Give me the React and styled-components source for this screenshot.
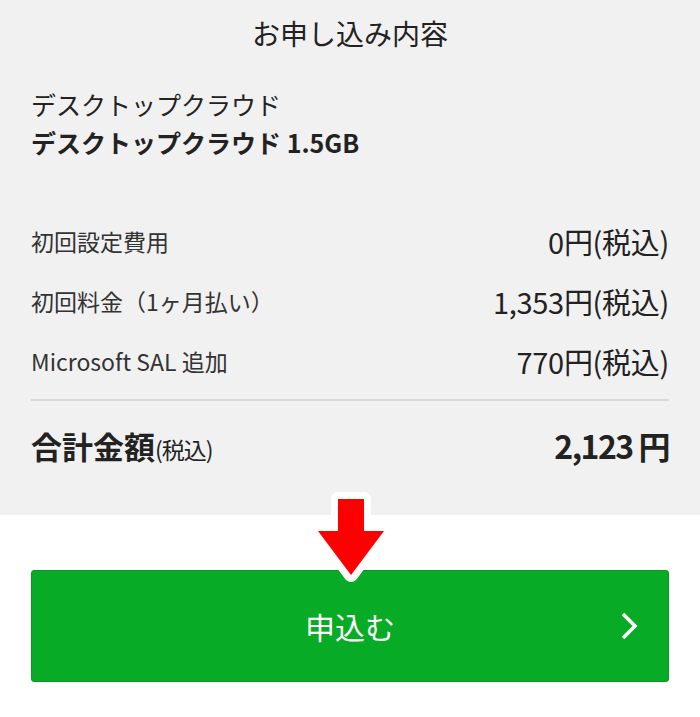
import React from 'react';
import styled, { createGlobalStyle } from 'styled-components';

const GlobalStyle = createGlobalStyle`
  html, body {
    margin: 0;
    padding: 0;
    background: #ffffff;
  }
  body {
    font-family: 'Noto Sans CJK JP', 'Noto Sans', sans-serif;
    color: #222222;
  }
`;

const Summary = styled.section`
  background: #f1f1f1;
  padding: 12px 31px 45px;
`;

const Title = styled.h2`
  margin: 0;
  font-size: 28px;
  line-height: 42px;
  font-weight: 400;
  text-align: center;
  color: #222;
`;

const Product = styled.div`
  margin-top: 32px;
  margin-bottom: 49px;
`;

const ProductLine = styled.div`
  font-size: 25px;
  line-height: ${(p) => (p.bold ? '40px' : '36px')};
  font-weight: ${(p) => (p.bold ? 700 : 400)};
  color: #222;
`;

const Row = styled.div`
  display: flex;
  justify-content: space-between;
  align-items: center;
  height: 60px;
`;

const Label = styled.span`
  font-size: 23px;
  color: #333;
`;

const Value = styled.span`
  font-size: 29px;
  color: #222;
  letter-spacing: -0.3px;
`;

const Divider = styled.hr`
  margin: 8px 0 0;
  border: none;
  height: 2px;
  background: #d9d9d9;
`;

const TotalRow = styled.div`
  display: flex;
  justify-content: space-between;
  align-items: center;
  height: 50px;
  margin-top: 19px;
`;

const TotalLabel = styled.span`
  font-size: 31px;
  font-weight: 700;
  color: #222;

  small {
    font-size: 23px;
    font-weight: 400;
    letter-spacing: -1px;
  }
`;

const TotalValue = styled.span`
  font-size: 32px;
  font-weight: 700;
  color: #222;
  letter-spacing: -1.5px;
`;

const ButtonArea = styled.div`
  position: relative;
  padding: 55px 31px;
`;

const ApplyButton = styled.button`
  position: relative;
  display: flex;
  align-items: center;
  justify-content: center;
  width: 100%;
  height: 112px;
  border: 1px solid #069a20;
  border-radius: 3px;
  background: #08ab25;
  color: #ffffff;
  font-family: 'Noto Sans CJK JP', 'Noto Sans', sans-serif;
  font-size: 30px;
  cursor: pointer;
`;

const Chevron = styled.svg`
  position: absolute;
  right: 30px;
  top: 50%;
  transform: translateY(-50%);
`;

const PointerArrow = styled.svg`
  position: absolute;
  left: 310px;
  top: -28px;
  z-index: 2;
`;

const rows = [
  { label: '初回設定費用', value: '0円(税込)' },
  { label: '初回料金（1ヶ月払い）', value: '1,353円(税込)' },
  { label: 'Microsoft SAL 追加', value: '770円(税込)' },
];

export default function App() {
  return (
    <>
      <GlobalStyle />
      <Summary>
        <Title>お申し込み内容</Title>
        <Product>
          <ProductLine>デスクトップクラウド</ProductLine>
          <ProductLine bold>デスクトップクラウド 1.5GB</ProductLine>
        </Product>
        {rows.map((r) => (
          <Row key={r.label}>
            <Label>{r.label}</Label>
            <Value>{r.value}</Value>
          </Row>
        ))}
        <Divider />
        <TotalRow>
          <TotalLabel>
            合計金額<small>(税込)</small>
          </TotalLabel>
          <TotalValue>2,123 円</TotalValue>
        </TotalRow>
      </Summary>
      <ButtonArea>
        <PointerArrow width="82" height="100" viewBox="0 0 82 100">
          <path
            d="M28 12 H54 V44 H74 L41 88 L8 44 H28 Z"
            fill="#ff0000"
            stroke="#ffffff"
            strokeWidth="14"
            strokeLinejoin="round"
            paintOrder="stroke"
          />
        </PointerArrow>
        <ApplyButton>
          申込む
          <Chevron width="18" height="30" viewBox="0 0 18 30">
            <polyline
              points="3,3 15,15 3,27"
              fill="none"
              stroke="#ffffff"
              strokeWidth="3.5"
            />
          </Chevron>
        </ApplyButton>
      </ButtonArea>
    </>
  );
}
